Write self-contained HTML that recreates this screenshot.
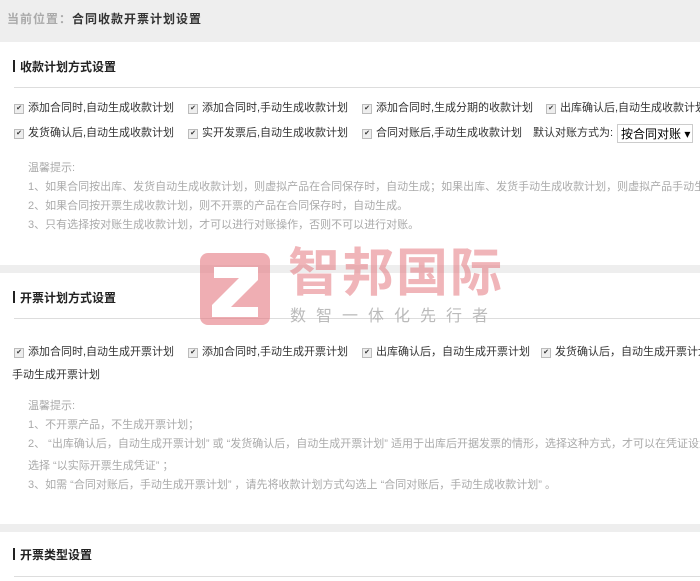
<!DOCTYPE html>
<html><head><meta charset="utf-8"><style>
body{margin:0;width:700px;height:581px;overflow:hidden;background:#fff;font-family:"Liberation Sans","Noto Sans CJK SC",sans-serif;font-size:11px;color:#333;position:relative}
.a{position:absolute;white-space:nowrap;line-height:14px}
.hdr{position:absolute;left:0;top:0;width:700px;height:42px;background:#eee}
.band{position:absolute;left:0;width:700px;height:8px;background:#eee}
.ttl{font-weight:bold;font-size:12px;color:#222}
.ttl:before{content:"";display:inline-block;width:2px;height:12px;background:#222;margin-right:5px;vertical-align:-1px}
.ln{position:absolute;left:14px;width:686px;height:1px;background:#ddd}
.cb{display:inline-block;width:8px;height:8px;border:1px solid #bbb;background:#eee;margin-right:4px;vertical-align:1px;font-size:7px;line-height:8px;text-align:center;color:#333}
.tip{color:#aaa;font-size:11px}
</style></head><body>
<div class="hdr"></div>
<div class="a" style="left:7px;top:12px;font-size:12px;font-weight:bold;letter-spacing:1px"><span style="color:#aaa">当前位置：</span><span style="color:#333">合同收款开票计划设置</span></div>

<div class="a ttl" style="left:13px;top:60px">收款计划方式设置</div>
<div class="ln" style="top:87px"></div>
<div class="a" style="left:14px;top:101px"><span class="cb">✔</span>添加合同时,自动生成收款计划</div>
<div class="a" style="left:188px;top:101px"><span class="cb">✔</span>添加合同时,手动生成收款计划</div>
<div class="a" style="left:362px;top:101px"><span class="cb">✔</span>添加合同时,生成分期的收款计划</div>
<div class="a" style="left:546px;top:101px"><span class="cb">✔</span>出库确认后,自动生成收款计划</div>
<div class="a" style="left:14px;top:126px"><span class="cb">✔</span>发货确认后,自动生成收款计划</div>
<div class="a" style="left:188px;top:126px"><span class="cb">✔</span>实开发票后,自动生成收款计划</div>
<div class="a" style="left:362px;top:126px"><span class="cb">✔</span>合同对账后,手动生成收款计划</div>
<div class="a" style="left:533px;top:126px">默认对账方式为:</div>
<div class="a" style="left:617px;top:124px;width:76px;height:19px;border:1px solid #ccc;line-height:18px;padding-left:3px;box-sizing:border-box;font-size:12px;color:#000">按合同对账 ▾</div>

<div class="a tip" style="left:28px;top:161px">温馨提示:</div>
<div class="a tip" style="left:28px;top:180px">1、如果合同按出库、发货自动生成收款计划，则虚拟产品在合同保存时，自动生成；如果出库、发货手动生成收款计划，则虚拟产品手动生成</div>
<div class="a tip" style="left:28px;top:199px">2、如果合同按开票生成收款计划，则不开票的产品在合同保存时，自动生成。</div>
<div class="a tip" style="left:28px;top:218px">3、只有选择按对账生成收款计划，才可以进行对账操作，否则不可以进行对账。</div>

<div class="band" style="top:265px"></div>

<div class="a ttl" style="left:13px;top:291px">开票计划方式设置</div>
<div class="ln" style="top:318px"></div>
<div class="a" style="left:14px;top:345px"><span class="cb">✔</span>添加合同时,自动生成开票计划</div>
<div class="a" style="left:188px;top:345px"><span class="cb">✔</span>添加合同时,手动生成开票计划</div>
<div class="a" style="left:362px;top:345px"><span class="cb">✔</span>出库确认后，自动生成开票计划</div>
<div class="a" style="left:541px;top:345px"><span class="cb">✔</span>发货确认后，自动生成开票计划</div>
<div class="a" style="left:12px;top:368px">手动生成开票计划</div>

<div class="a tip" style="left:28px;top:399px">温馨提示:</div>
<div class="a tip" style="left:28px;top:418px">1、不开票产品，不生成开票计划；</div>
<div class="a tip" style="left:28px;top:437px">2、 “出库确认后，自动生成开票计划” 或 “发货确认后，自动生成开票计划” 适用于出库后开据发票的情形，选择这种方式，才可以在凭证设置中</div>
<div class="a tip" style="left:28px;top:459px">选择 “以实际开票生成凭证” ；</div>
<div class="a tip" style="left:28px;top:478px">3、如需 “合同对账后，手动生成开票计划” ，请先将收款计划方式勾选上 “合同对账后，手动生成收款计划” 。</div>

<div class="band" style="top:524px"></div>
<div class="a ttl" style="left:13px;top:548px">开票类型设置</div>
<div class="ln" style="top:576px"></div>

<div class="a" style="left:200px;top:253px;width:70px;height:72px;background:rgba(228,120,128,0.6);border-radius:8px"></div>
<svg class="a" style="left:200px;top:253px" width="70" height="72"><path d="M14 14 H58 V27 L31 54 H58 V64 H12 V52 L39 25 H14 Z" fill="#fff"/></svg>
<div class="a" style="left:288px;top:244px;font-size:52px;font-weight:bold;color:rgba(228,120,128,0.55);letter-spacing:2px;line-height:60px">智邦国际</div>
<div class="a" style="left:290px;top:308px;font-size:16px;color:rgba(170,170,170,0.8);letter-spacing:10px;line-height:18px">数智一体化先行者</div>
</body></html>
